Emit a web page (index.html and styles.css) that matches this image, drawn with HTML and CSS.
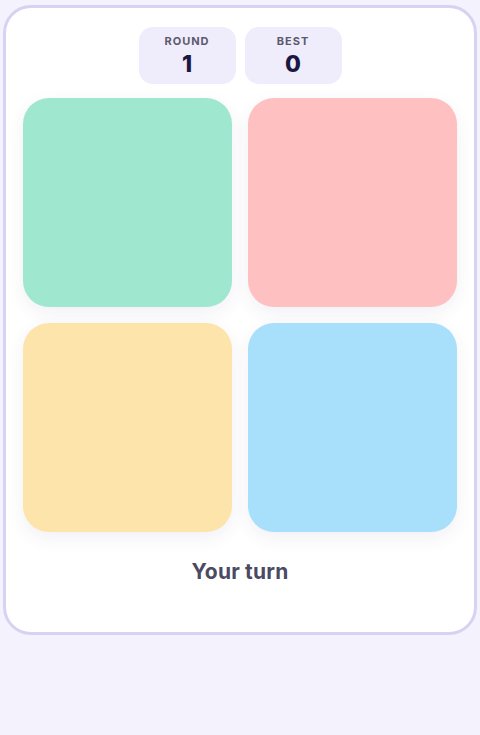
FILE: index.html
```html
<!DOCTYPE html>
<html lang="en">
<head>
    <meta charset="UTF-8">
    <meta name="viewport" content="width=device-width, initial-scale=1.0">
    <title>Simon</title>
    <link rel="stylesheet" href="styles.css">
</head>
<body>
    <div class="card">
        <div class="stats">
            <div class="stat">
                <div class="stat-label">Round</div>
                <div class="stat-value" id="round">1</div>
            </div>
            <div class="stat">
                <div class="stat-label">Best</div>
                <div class="stat-value" id="best">0</div>
            </div>
        </div>

        <div class="board">
            <button class="pad green"></button>
            <button class="pad red"></button>
            <button class="pad yellow"></button>
            <button class="pad blue"></button>
        </div>

        <p class="status">Your turn</p>
    </div>
</body>
</html>
```

FILE: styles.css
```css
body {
    margin: 0;
    background-color: #f4f2fc;
    font-family: Inter, "Noto Sans", sans-serif;
}
.card {
    margin: 5px 3px 0;
    padding: 19px 17px 46px;
    background-color: #fff;
    border: 3px solid #d8d1f4;
    border-radius: 28px;
}
.stats {
    display: flex;
    justify-content: center;
    gap: 9px;
}
.stat {
    width: 97px;
    height: 57px;
    box-sizing: border-box;
    padding-top: 7px;
    background-color: #efecfb;
    border-radius: 14px;
    text-align: center;
}
.stat-label {
    font-size: 11px;
    font-weight: 700;
    letter-spacing: 1px;
    text-transform: uppercase;
    color: #5b596f;
    line-height: 14px;
}
.stat-value {
    font-size: 23px;
    font-weight: 800;
    color: #1b1740;
    line-height: 32px;
}
.board {
    display: grid;
    grid-template-columns: 1fr 1fr;
    gap: 16px;
    margin-top: 14px;
}
.pad {
    height: 209px;
    border: none;
    border-radius: 26px;
    box-shadow: 0 6px 18px rgba(60, 50, 120, 0.07);
    cursor: pointer;
}
.green { background-color: #a0e7cf; }
.red { background-color: #ffc0c1; }
.yellow { background-color: #fde4aa; }
.blue { background-color: #a8dffa; }
.status {
    margin: 26px 0 0;
    text-align: center;
    font-size: 21px;
    font-weight: 700;
    letter-spacing: 0.2px;
    line-height: 28px;
    color: #4b4a62;
}
```
